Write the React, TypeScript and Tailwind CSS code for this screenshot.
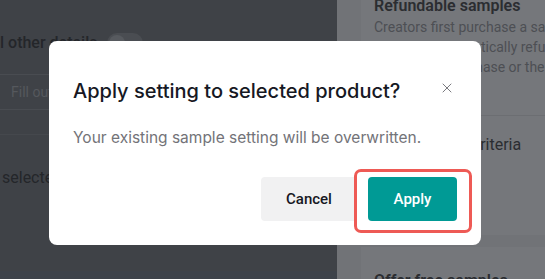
import React from "react";
import { X } from "lucide-react";

const font = { fontFamily: "Roboto, 'Liberation Sans', sans-serif" };
const dialogFont = { fontFamily: "Inter, Roboto, 'Liberation Sans', sans-serif" };

const Background = () => {
  return (
    <div className="flex w-[545px] h-[279px]">
      {/* left form column, dimmed */}
      <div className="w-[337px] shrink-0 flex flex-col bg-[#3f4247] text-[#24262a]">
        <div className="h-[75px] pt-[12px] flex items-center gap-[10px] border-b border-[#494c51]">
          <span className="text-[16px] font-medium leading-[22px] whitespace-nowrap">
            l other details
          </span>
          <div className="w-[36px] h-[20px] rounded-full bg-[#4a4d52] flex items-center px-[2px]">
            <div className="w-[16px] h-[16px] rounded-full bg-[#575a5f]" />
          </div>
        </div>
        <div className="h-[35px] flex items-center pl-[11px] border-b border-[#494c51]">
          <span className="text-[14px] text-[#55585d]">Fill out other details</span>
        </div>
        <div className="h-[25px] border-b border-[#45484d]" />
        <div className="h-[136px] pt-[31px] pl-[2px]">
          <span className="text-[16px] leading-[20px] whitespace-nowrap">selected products</span>
        </div>
        <div className="flex-1 bg-[#3d424a]" />
      </div>

      {/* right settings column, dimmed */}
      <div className="flex-1 overflow-hidden bg-[#717377] pl-[24px]">
        <div className="mt-[-17px] flex flex-col gap-[12px] w-[260px]">
          <div className="bg-[#75777b]">
            <div className="pt-[12px] pl-[13px] h-[133px] border-b border-[#6c6e72]">
              <div className="text-[16px] leading-[22px] font-semibold text-[#2b2d31] whitespace-nowrap">
                Refundable samples
              </div>
              <div className="text-[14px] leading-[20px] text-[#4d4f54] whitespace-nowrap">
                <div>Creators first purchase a sample,</div>
                <div>samples, automatically refunded</div>
                <div>refunded in purchase or the</div>
              </div>
            </div>
            <div className="pt-[18px] pl-[17px] h-[119px]">
              <div className="text-[16px] leading-[22px] text-[#2b2d31] whitespace-nowrap">
                Set eligibility criteria
              </div>
            </div>
          </div>
          <div className="bg-[#75777b] h-[60px] pt-[23px] pl-[13px]">
            <div className="text-[16px] leading-[22px] font-semibold text-[#2b2d31] whitespace-nowrap">
              Offer free samples
            </div>
          </div>
        </div>
      </div>
    </div>
  );
};

const ConfirmModal = () => {
  return (
    <div
      className="absolute left-[49px] top-[41px] w-[432px] h-[204px] bg-white rounded-[8px] px-[24px] pt-[36px] pb-[24px] flex flex-col"
      style={dialogFont}
    >
      <div className="flex justify-between items-start">
        <h2 className="text-[20px] leading-[28px] font-medium text-[#161823]">
          Apply setting to selected product?
        </h2>
        <button className="mt-[3px] mr-[2px] text-[#7a7a7f]">
          <X size={16} strokeWidth={1.5} />
        </button>
      </div>
      <p className="mt-[22px] text-[15.5px] leading-[22px] text-[#737378]">
        Your existing sample setting will be overwritten.
      </p>
      <div className="mt-auto flex justify-end gap-[11px]" style={font}>
        <button className="w-[96px] h-[44px] rounded-[4px] bg-[#f1f1f2] text-[15px] font-medium text-[#161823]">
          Cancel
        </button>
        <button className="w-[89px] h-[44px] rounded-[4px] bg-[#009a95] text-[15px] font-medium text-white">
          Apply
        </button>
      </div>
      {/* highlight annotation */}
      <div className="absolute left-[305px] top-[128px] w-[118px] h-[64px] rounded-[7px] border-[3px] border-[#ee5a55] pointer-events-none" />
    </div>
  );
};

export default function App() {
  return (
    <div className="relative w-[545px] h-[279px] overflow-hidden" style={font}>
      <Background />
      <ConfirmModal />
    </div>
  );
}
